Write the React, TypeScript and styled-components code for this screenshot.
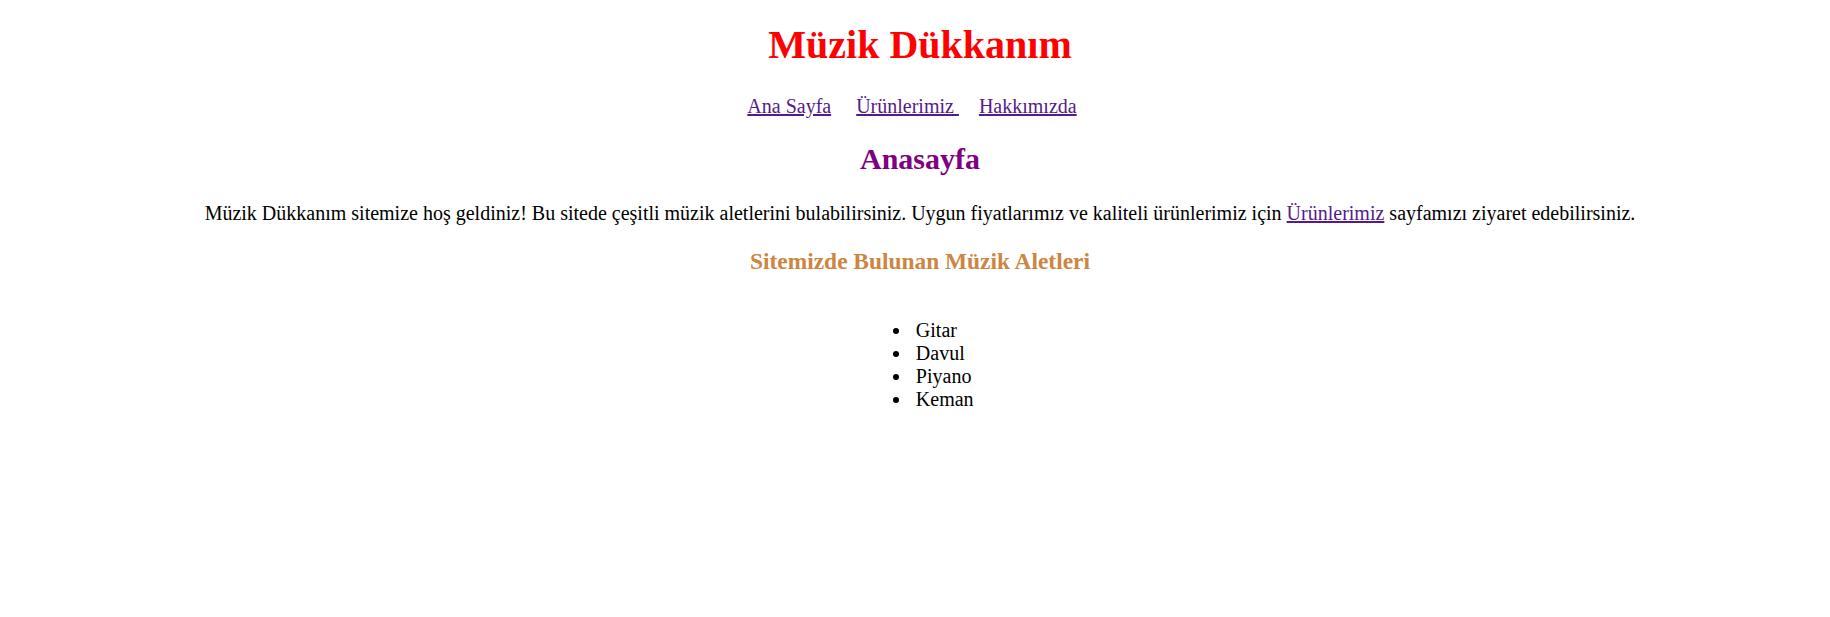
import React from 'react';
import styled, { createGlobalStyle } from 'styled-components';

const GlobalStyle = createGlobalStyle`
  html, body {
    margin: 0;
    padding: 0;
    background: #ffffff;
  }
  body {
    padding: 10px 10px 10px 20px;
    font-family: "Liberation Serif", "Times New Roman", serif;
    font-size: 20px;
    color: #000000;
  }
`;

const Page = styled.div`
  text-align: center;
`;

const Title = styled.h1`
  color: #ff0000;
  font-size: 40px;
  font-weight: bold;
  margin: 11px 0 27px;
`;

const Nav = styled.nav`
  margin: 0 0 24px;
`;

const NavLink = styled.a`
  color: #551a8b;
  text-decoration: underline;
  margin: 0 18px 0 2px;
  cursor: pointer;
`;

const Section = styled.main``;

const Heading = styled.h2`
  color: #800080;
  font-size: 30px;
  font-weight: bold;
  margin: 0 0 26px;
`;

const Intro = styled.p`
  margin: 0 0 23px;
`;

const InlineLink = styled.a`
  color: #551a8b;
  text-decoration: underline;
  cursor: pointer;
`;

const SubHeading = styled.h3`
  color: #cd853f;
  font-size: 23.4px;
  font-weight: bold;
  margin: 0 0 44px;
`;

const List = styled.ul`
  display: inline-block;
  text-align: left;
  margin: 0 0 0 6px;
  padding-left: 40px;
`;

const Item = styled.li`
  line-height: 23px;
  padding-left: 3.5px;
`;

const instruments = ['Gitar', 'Davul', 'Piyano', 'Keman'];

const App: React.FC = () => {
  return (
    <Page>
      <GlobalStyle />
      <Title>Müzik Dükkanım</Title>
      <Nav>
        <NavLink>Ana Sayfa</NavLink> <NavLink>Ürünlerimiz </NavLink>
        <NavLink>Hakkımızda</NavLink>
      </Nav>
      <Section>
        <Heading>Anasayfa</Heading>
        <Intro>
          Müzik Dükkanım sitemize hoş geldiniz! Bu sitede çeşitli müzik aletlerini bulabilirsiniz. Uygun
          fiyatlarımız ve kaliteli ürünlerimiz için <InlineLink>Ürünlerimiz</InlineLink> sayfamızı ziyaret
          edebilirsiniz.
        </Intro>
        <SubHeading>Sitemizde Bulunan Müzik Aletleri</SubHeading>
        <List>
          {instruments.map((name) => (
            <Item key={name}>{name}</Item>
          ))}
        </List>
      </Section>
    </Page>
  );
};

export default App;
